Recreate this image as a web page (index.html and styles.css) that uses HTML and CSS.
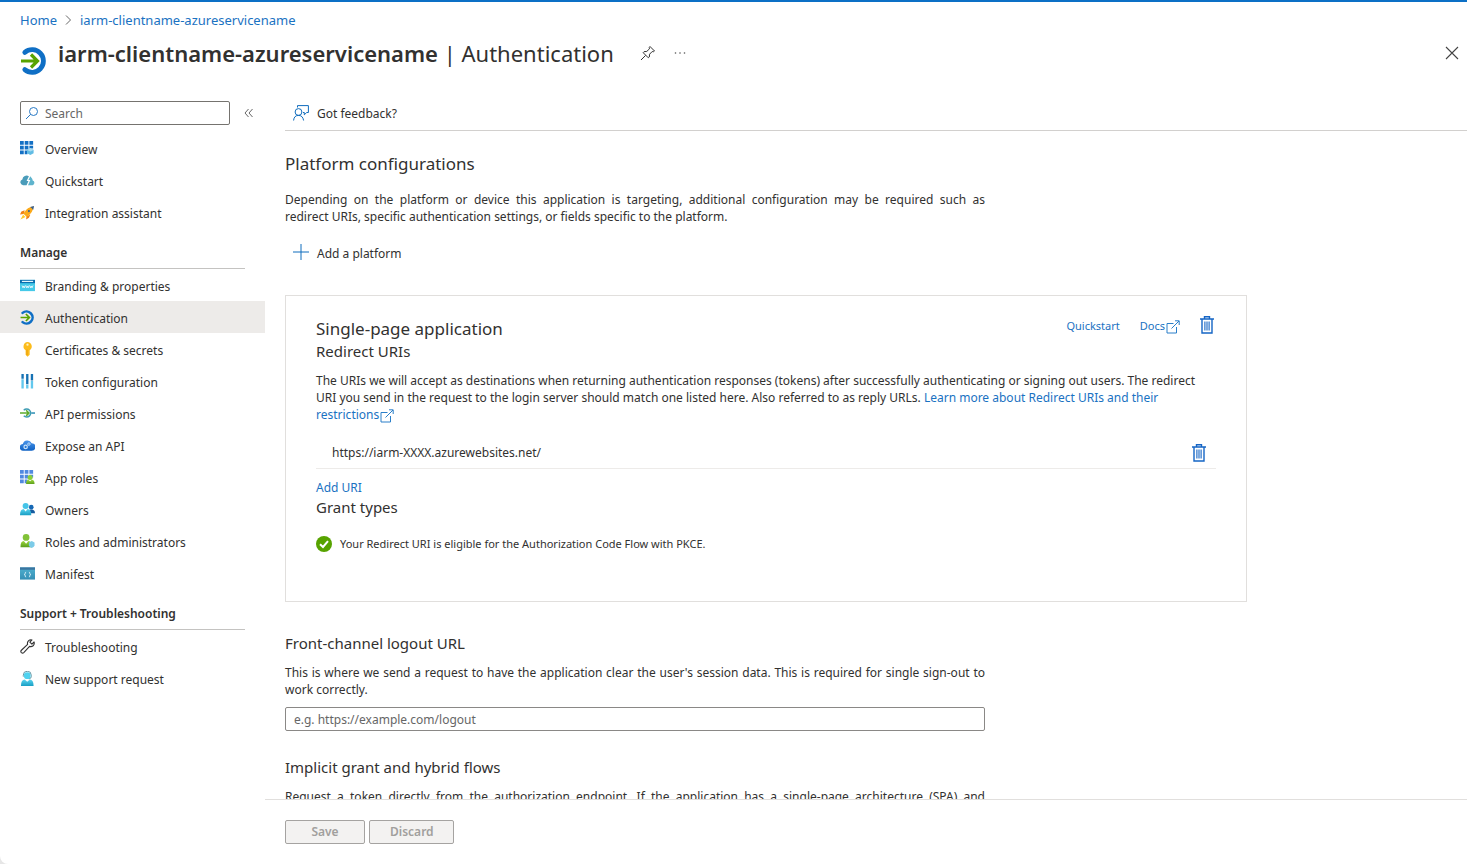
FILE: index.html
```html
<!DOCTYPE html>
<html lang="en">
<head>
<meta charset="utf-8">
<meta name="viewport" content="width=device-width, initial-scale=1">
<title>iarm-clientname-azureservicename | Authentication</title>
<link rel="stylesheet" href="styles.css">
</head>
<body>
<svg class="sprite" aria-hidden="true">
  <defs>
    <linearGradient id="cyan" x1="0" y1="0" x2="0" y2="1"><stop offset="0" stop-color="#5ad4f0"/><stop offset="1" stop-color="#1a9fc4"/></linearGradient>
    <linearGradient id="blue" x1="0" y1="0" x2="0" y2="1"><stop offset="0" stop-color="#4a95ea"/><stop offset="1" stop-color="#0f62c4"/></linearGradient>
    <linearGradient id="teal" x1="0" y1="0" x2="0" y2="1"><stop offset="0" stop-color="#4fb0cf"/><stop offset="1" stop-color="#358fb5"/></linearGradient>
    <linearGradient id="green" x1="0" y1="0" x2="0" y2="1"><stop offset="0" stop-color="#9bd53c"/><stop offset="1" stop-color="#5b9f1c"/></linearGradient>
  </defs>
  <symbol id="auth" viewBox="0 0 28 28">
    <path d="M4.800 5.400A11.300 11.300 0 1 1 4.800 22.600" fill="none" stroke="#0f6fc5" stroke-width="4.800" stroke-linecap="round"/>
    <path d="M1 14H17M11 7.500L17.500 14L11 20.500" fill="none" stroke="#57a300" stroke-width="3.200"/>
  </symbol>
  <symbol id="trash" viewBox="0 0 14 18">
    <path d="M2 3.500V17H12V3.500M0 3H14M4.500 2.800V.8H9.500V2.800" fill="none" stroke="#1565c5" stroke-width="1.400"/>
    <path d="M4.900 5.500V14.500M7 5.500V14.500M9.100 5.500V14.500" stroke="#1565c5" stroke-width="1.100"/>
  </symbol>
  <symbol id="external" viewBox="0 0 14 14">
    <path d="M7.5 3.5H1V13H10.5V7M5.5 8.5L13 1M9 .8H13.2V5" fill="none" stroke="#2b7fc9" stroke-width="1"/>
  </symbol>
</svg>

<header class="header">
  <nav class="breadcrumb" aria-label="Breadcrumb">
    <a href="#">Home</a>
    <svg width="7" height="12" viewBox="0 0 7 12"><path d="M1 1.5L5.5 6L1 10.5" fill="none" stroke="#666"/></svg>
    <a href="#">iarm-clientname-azureservicename</a>
  </nav>
  <div class="title-row">
    <svg class="title-icon" viewBox="0 0 28 28"><use href="#auth"/></svg>
    <h1><strong>iarm-clientname-azureservicename</strong> | Authentication</h1>
    <button class="icon-button pin" aria-label="Pin">
      <svg width="16" height="16" viewBox="0 0 16 16"><path d="M10 1.5L14.5 6L13.3 6.8L12.2 6.5L9.6 9.2L9.3 12L8.3 12.8L3.2 7.7L4 6.7L6.8 6.4L9.5 3.8L9.2 2.6ZM5.6 10.4L1 15" fill="none" stroke="#333"/></svg>
    </button>
    <button class="icon-button" aria-label="More">
      <svg width="14" height="16" viewBox="0 0 14 16" fill="#555"><circle cx="2.500" cy="8" r=".8"/><circle cx="7" cy="8" r=".8"/><circle cx="11.500" cy="8" r=".8"/></svg>
    </button>
    <button class="icon-button close" aria-label="Close">
      <svg width="14" height="14" viewBox="0 0 14 14"><path d="M1 1L13 13M13 1L1 13" stroke="#444" stroke-width="1.1"/></svg>
    </button>
  </div>
</header>

<div class="body">
  <aside class="sidebar">
    <div class="search-row">
      <label class="search">
        <svg width="14" height="14" viewBox="0 0 14 14"><circle cx="8.5" cy="5.5" r="4" fill="none" stroke="#2879c4"/><path d="M5.6 8.4L1 13" stroke="#2879c4"/></svg>
        <input type="search" placeholder="Search" aria-label="Search">
      </label>
      <button class="icon-button" aria-label="Collapse menu">
        <svg width="10" height="10" viewBox="0 0 10 10"><path d="M4.5 1L1 5L4.5 9M8.5 1L5 5L8.5 9" fill="none" stroke="#666"/></svg>
      </button>
    </div>
    <nav class="menu" aria-label="Resource menu">
      <a class="item" href="#"><svg viewBox="0 0 16 16"><path d="M0 0H4V4H0ZM5 0H9V4H5ZM10 0H14V4H10ZM0 5H4V9H0ZM5 5H9V9H5ZM10 5H14V8H10ZM0 10H4V14H0ZM5 10H8V14H5Z" fill="#1470c4"/><path d="M11 7.500L14.500 9.500V13L11 15L7.500 13V9.500Z" fill="#61bce4"/><path d="M11 7.500L14.500 9.500L11 11.300L7.500 9.500Z" fill="#a9dcf2"/></svg>Overview</a>
      <a class="item" href="#"><svg viewBox="0 0 16 16"><path d="M3.300 13A3.200 3.200 0 0 1 2.500 6.800A4.600 4.600 0 0 1 9.500 3.500L7 8.500H9L7 13Z" fill="#4a9cba"/><path d="M11 3.500L13 6A4 4 0 0 1 13.500 8A2.600 2.600 0 0 1 13.500 13H8.500L11 7.500H9Z" fill="#5fb4cd"/></svg>Quickstart</a>
      <a class="item" href="#"><svg viewBox="0 0 16 16"><path d="M5 5.500L1.500 7L0 10L4 9.500ZM11 10.500L9.500 13.500L6.500 15.500L7 12Z" fill="#f07f13"/><path d="M14.500 1.500Q8 1.500 3.500 9L7.200 12.700Q14 8 14.500 1.500Z" fill="#fba919"/><path d="M15 1L10.800 2Q12.800 3.200 14 5.200Z" fill="#365f91"/><circle cx="9.500" cy="6.500" r="1.100" fill="#365f91"/><path d="M3.300 10.500L.5 15.500L5.800 12.800Z" fill="#ffca28"/></svg>Integration assistant</a>

      <h2>Manage</h2>
      <a class="item" href="#"><svg viewBox="0 0 16 16"><path d="M0 2H16V14H0Z" fill="#45c9e8"/><path d="M0 2H16V5.500H0Z" fill="#0a6fae"/><path d="M2 3H14V4.300H2Z" fill="#e6f7fc"/><path d="M2.200 8L3.200 10.500L4 8.500L4.800 10.500L5.700 8M6.300 8L7.200 10.500L8 8.500L8.800 10.500L9.700 8M10.300 8L11.200 10.500L12 8.500L12.800 10.500L13.800 8" fill="none" stroke="#fff" stroke-width=".8"/></svg>Branding &amp; properties</a>
      <a class="item selected" href="#" aria-current="page"><svg viewBox="0 0 28 28"><use href="#auth"/></svg>Authentication</a>
      <a class="item" href="#"><svg viewBox="0 0 16 16"><path d="M8 0A4.700 4.700 0 0 1 10.300 8.700V13.500L8 15.800L6 13.500V8.700A4.700 4.700 0 0 1 8 0Z" fill="#fcbc1c"/><circle cx="8" cy="2.800" r="1.200" fill="#fff3c8"/><path d="M7.500 8V14" stroke="#e89a0c"/></svg>Certificates &amp; secrets</a>
      <a class="item" href="#"><svg viewBox="0 0 16 16"><path d="M1.500 0H4V5H1.500ZM6.500 0H9V11H6.500ZM11.500 0H14V7H11.500Z" fill="#1672b4"/><path d="M1.500 5.500H4V15.500H1.500ZM6.500 11.500H9V15.500H6.500ZM11.500 7.500H14V15.500H11.500Z" fill="#62c8ee"/></svg>Token configuration</a>
      <a class="item" href="#"><svg viewBox="0 0 16 16"><path d="M4 4.500A4.300 4.300 0 1 1 4 10.500" fill="none" stroke="#3e9cb4" stroke-width="1.600"/><path d="M12 7.500H16" stroke="#2a8db4" stroke-width="1.600"/><path d="M0 7.500H9M6.500 4.500L9.500 7.500L6.500 10.500" fill="none" stroke="#5eaa2c" stroke-width="1.700"/></svg>API permissions</a>
      <a class="item" href="#"><svg viewBox="0 0 16 16"><path d="M3.500 13.500A3.500 3.500 0 0 1 3 6.500A5 5 0 0 1 12.400 5.500A4 4 0 0 1 12.500 13.500Z" fill="url(#blue)"/><circle cx="6" cy="9.500" r="1.800" fill="none" stroke="#c6e2fb" stroke-width="1.300"/><circle cx="9.500" cy="6.500" r="1.300" fill="none" stroke="#c6e2fb"/></svg>Expose an API</a>
      <a class="item" href="#"><svg viewBox="0 0 16 16"><path d="M0 0H4V4H0ZM5 0H9V4H5ZM10 0H14V4H10ZM0 5H4V9H0ZM5 5H9V9H5ZM10 5H14V8H10ZM0 10H4V14H0ZM5 10H8V14H5Z" fill="#5089e0"/><circle cx="10.800" cy="8" r="2.700" fill="#8bcf38"/><path d="M6.500 15Q6.500 10.500 9 10.500L10.800 12L12.500 10.500Q15.500 10.500 15.500 15Z" fill="url(#green)"/></svg>App roles</a>
      <a class="item" href="#"><svg viewBox="0 0 16 16"><circle cx="12" cy="5.500" r="2.500" fill="#1668b5"/><path d="M9 12V9.500Q10 8 12 8Q16 8 16 12Z" fill="#155b9f"/><circle cx="6" cy="4.200" r="3.200" fill="#45c4e8"/><path d="M0 14Q0 7.500 4 7.500L6 10L8 7.500Q12 7.500 12 14Z" fill="url(#cyan)"/></svg>Owners</a>
      <a class="item" href="#"><svg viewBox="0 0 16 16"><circle cx="6.500" cy="3.700" r="3.600" fill="#82c238"/><path d="M.5 14Q.5 7.500 4 7.500L6.500 10.500L9 7.500Q12.500 7.500 12.500 14Z" fill="url(#green)"/><path d="M12.500 7.500L15.500 9V12Q15.500 13.500 12.500 15Q9.500 13.500 9.500 12V9Z" fill="#7ccbe8"/></svg>Roles and administrators</a>
      <a class="item" href="#"><svg viewBox="0 0 16 16"><path d="M0 1.500H16V14.500H0Z" fill="url(#teal)"/><path d="M0 1.500H16V4H0Z" fill="#3b749f"/><path d="M6.500 6.500Q5.500 6.500 5.500 8Q5.500 9 4.700 9Q5.500 9 5.500 10.500Q5.500 11.700 6.500 11.700M9.500 6.500Q10.500 6.500 10.500 8Q10.500 9 11.300 9Q10.500 9 10.500 10.500Q10.500 11.700 9.500 11.700" fill="none" stroke="#e5f6fc"/></svg>Manifest</a>

      <h2>Support + Troubleshooting</h2>
      <a class="item" href="#"><svg viewBox="0 0 16 16"><path d="M12.800 1L10.500 3.300L12.700 5.500L15 3.200Q15.700 5.500 14 7.200Q12.300 8.500 10.200 7.900L4 14.500Q2.800 15.700 1.500 14.500Q.3 13.200 1.500 12L8.100 5.800Q7.500 3.700 9 2.100Q10.600 .4 12.800 1Z" fill="none" stroke="#333" stroke-width="1.200" stroke-linejoin="round"/></svg>Troubleshooting</a>
      <a class="item" href="#"><svg viewBox="0 0 16 16"><path d="M3.500 6V4.500A4 4 0 0 1 12 4.500V6Q12 8 9.500 8.500" fill="none" stroke="#5a8f9f"/><circle cx="7.700" cy="5" r="3.600" fill="#4fd2ef"/><path d="M1 16Q1 9 5 9L7.700 11.500L10.500 9Q14.500 9 14.500 16Z" fill="url(#cyan)"/></svg>New support request</a>
    </nav>
  </aside>

  <main class="main">
    <div class="toolbar">
      <button class="command">
        <svg width="16" height="16" viewBox="0 0 16 16"><circle cx="5.500" cy="7" r="3.400"/><path d="M.6 15.500Q1 10.400 5.500 10.400Q9.800 10.400 10.600 15.500M4.500 2.500V.6H15.400V7.500H13.700L11.300 9.800V7.500H10"/></svg>
        Got feedback?
      </button>
    </div>

    <div class="content">
      <section class="intro">
        <h2>Platform configurations</h2>
        <p class="justified">Depending on the platform or device this application is targeting, additional configuration may be required such as redirect&nbsp;URIs, specific authentication settings, or fields specific to the platform.</p>
        <button class="command add">
          <svg width="16" height="16" viewBox="0 0 16 16"><path d="M8 0V16M0 8H16"/></svg>
          Add a platform
        </button>
      </section>

      <section class="card">
        <div class="card-head">
          <h2>Single-page application</h2>
          <div class="card-links">
            <a href="#">Quickstart</a>
            <a href="#">Docs<svg class="external" viewBox="0 0 14 14"><use href="#external"/></svg></a>
            <button class="icon-button" aria-label="Delete platform"><svg width="14" height="18" viewBox="0 0 14 18"><use href="#trash"/></svg></button>
          </div>
        </div>
        <h3>Redirect URIs</h3>
        <p>The URIs we will accept as destinations when returning authentication responses (tokens) after successfully authenticating or signing out users. The redirect URI you send in the request to the login server should match one listed here. Also referred to as reply URLs. <a href="#">Learn more about Redirect URIs and their restrictions<svg class="external" viewBox="0 0 14 14"><use href="#external"/></svg></a></p>
        <div class="uri-row">
          <span>https://iarm-XXXX.azurewebsites.net/</span>
          <button class="icon-button" aria-label="Delete URI"><svg width="14" height="18" viewBox="0 0 14 18"><use href="#trash"/></svg></button>
        </div>
        <a class="add-uri" href="#">Add URI</a>
        <h3>Grant types</h3>
        <div class="status">
          <svg width="16" height="16" viewBox="0 0 16 16"><circle cx="8" cy="8" r="8" fill="#57a300"/><path d="M4 8.200L7 11L12 5.200" fill="none" stroke="#fff" stroke-width="2"/></svg>
          Your Redirect URI is eligible for the Authorization Code Flow with PKCE.
        </div>
      </section>

      <section class="setting">
        <h3><label for="logout-url">Front-channel logout URL</label></h3>
        <p class="justified">This is where we send a request to have the application clear the user's session data. This is required for single sign-out to work correctly.</p>
        <input id="logout-url" class="text-box" type="url" placeholder="e.g. https://example.com/logout">
      </section>

      <section class="setting">
        <h3>Implicit grant and hybrid flows</h3>
        <p class="justified full">Request a token directly from the authorization endpoint. If the application has a single-page architecture (SPA) and</p>
      </section>
    </div>

    <footer class="footer">
      <button class="save" disabled>Save</button>
      <button class="discard" disabled>Discard</button>
    </footer>
  </main>
</div>
</body>
</html>
```
FILE: styles.css
```css
* {
  box-sizing: border-box;
}

html {
  background: #e6e6e6;
}

body {
  display: flex;
  flex-direction: column;
  height: 100vh;
  margin: 0;
  border-top: 2px solid #0c70c6;
  border-bottom-left-radius: 8px;
  background: #fff;
  color: #323130;
  font: 12px/17px "Noto Sans", "Open Sans", sans-serif;
  overflow: hidden;
}

h1, h2, h3, p {
  margin: 0;
  font-weight: 400;
}

a {
  color: #1a72c2;
  text-decoration: none;
}

button, input {
  color: inherit;
  font: inherit;
}

.sprite {
  position: absolute;
  width: 0;
  height: 0;
}

.icon-button {
  display: flex;
  padding: 0;
  border: 0;
  background: none;
}

/* Header */

.header {
  padding: 9px 8px 0 20px;
}

.breadcrumb {
  display: flex;
  align-items: center;
  gap: 8px;
  font-size: 13px;
  line-height: 18px;
}

.title-row {
  display: flex;
  align-items: center;
  height: 48px;
}

.title-icon {
  width: 28px;
  height: 28px;
  margin: 16px 10px 0 0;
}

.title-row h1 {
  font-size: 22px;
  line-height: 32px;
}

.title-row strong {
  font-weight: 600;
}

.title-row .pin {
  margin: 0 17px 0 26px;
}

.title-row .close {
  margin-left: auto;
}

.body {
  display: flex;
  flex: 1;
  min-height: 0;
}

/* Sidebar */

.sidebar {
  flex: none;
  width: 265px;
  padding-top: 24px;
}

.search-row {
  display: flex;
  align-items: center;
  gap: 14px;
  padding-left: 20px;
  margin-bottom: 7px;
}

.search {
  display: flex;
  align-items: center;
  gap: 6px;
  width: 210px;
  height: 24px;
  padding: 0 4px;
  border: 1px solid #75736f;
  border-radius: 2px;
}

.search input {
  flex: 1;
  min-width: 0;
  padding: 0;
  border: 0;
  background: none;
  outline: 0;
}

::placeholder {
  color: #666;
  opacity: 1;
}

.menu h2 {
  height: 41px;
  margin: 0 20px;
  padding-top: 16px;
  border-bottom: 1px solid #c4c3c1;
  font-size: 12px;
  font-weight: 600;
}

.item {
  display: flex;
  align-items: center;
  gap: 10px;
  height: 32px;
  padding: 2px 20px 0;
  color: #323130;
}

.item svg {
  width: 15px;
  height: 15px;
  margin-bottom: 2px;
}

.item.selected {
  background: #edebe9;
}

/* Main pane */

.main {
  display: flex;
  flex: 1;
  flex-direction: column;
  min-width: 0;
}

.toolbar {
  display: flex;
  height: 54px;
  margin-left: 20px;
  padding: 27px 0 7px 8px;
  border-bottom: 1px solid #d2d0ce;
}

.command {
  display: flex;
  align-items: center;
  gap: 8px;
  padding: 0;
  border: 0;
  background: none;
}

.command svg {
  margin-bottom: 2px;
  fill: none;
  stroke: #0f6cbd;
  stroke-width: 1;
}

.content {
  flex: 1;
  min-height: 0;
  padding: 21px 20px 0;
  overflow: hidden;
}

.content h2 {
  font-size: 17px;
  line-height: 24px;
}

.content h3 {
  font-size: 15px;
  line-height: 22px;
}

.intro p {
  margin-top: 15px;
}

.justified {
  max-width: 700px;
  text-align: justify;
}

.justified.full {
  text-align-last: justify;
}

.command.add {
  margin: 19px 0 33px 8px;
}

.card {
  max-width: 962px;
  min-height: 307px;
  padding: 21px 30px;
  border: 1px solid #e1dfdd;
}

.card-head {
  display: flex;
  justify-content: space-between;
  height: 23px;
}

.card-links {
  display: flex;
  align-items: center;
  gap: 20px;
  height: 16px;
  padding-right: 2px;
  font-size: 11px;
}

.external {
  width: 14px;
  height: 14px;
  margin-left: 1px;
  vertical-align: -4px;
}

.card p {
  margin-top: 10px;
}

.uri-row {
  display: flex;
  align-items: center;
  justify-content: space-between;
  height: 32px;
  margin-top: 14px;
  padding: 0 10px 0 16px;
  border-bottom: 1px solid #edebe9;
}

.add-uri {
  display: block;
  margin-top: 11px;
  line-height: 16px;
}

.status {
  display: flex;
  align-items: center;
  gap: 8px;
  margin-top: 17px;
  font-size: 11px;
}

.setting {
  margin-top: 25px;
}

.card + .setting {
  margin-top: 30px;
}

.setting p {
  margin-top: 10px;
}

.text-box {
  display: block;
  width: 100%;
  max-width: 700px;
  height: 24px;
  margin-top: 9px;
  padding: 0 8px;
  border: 1px solid #8a8886;
  border-radius: 2px;
}

.footer {
  display: flex;
  gap: 4px;
  height: 65px;
  padding: 20px;
  border-top: 1px solid #e1dfdd;
}

.footer button {
  height: 24px;
  padding: 0 20px 1px;
  border: 1px solid #a5a3a1;
  border-radius: 2px;
  background: #f3f2f1;
  color: #a19f9d;
  font-weight: 600;
}

.footer .save {
  width: 80px;
}

.footer .discard {
  width: 85px;
}
```
